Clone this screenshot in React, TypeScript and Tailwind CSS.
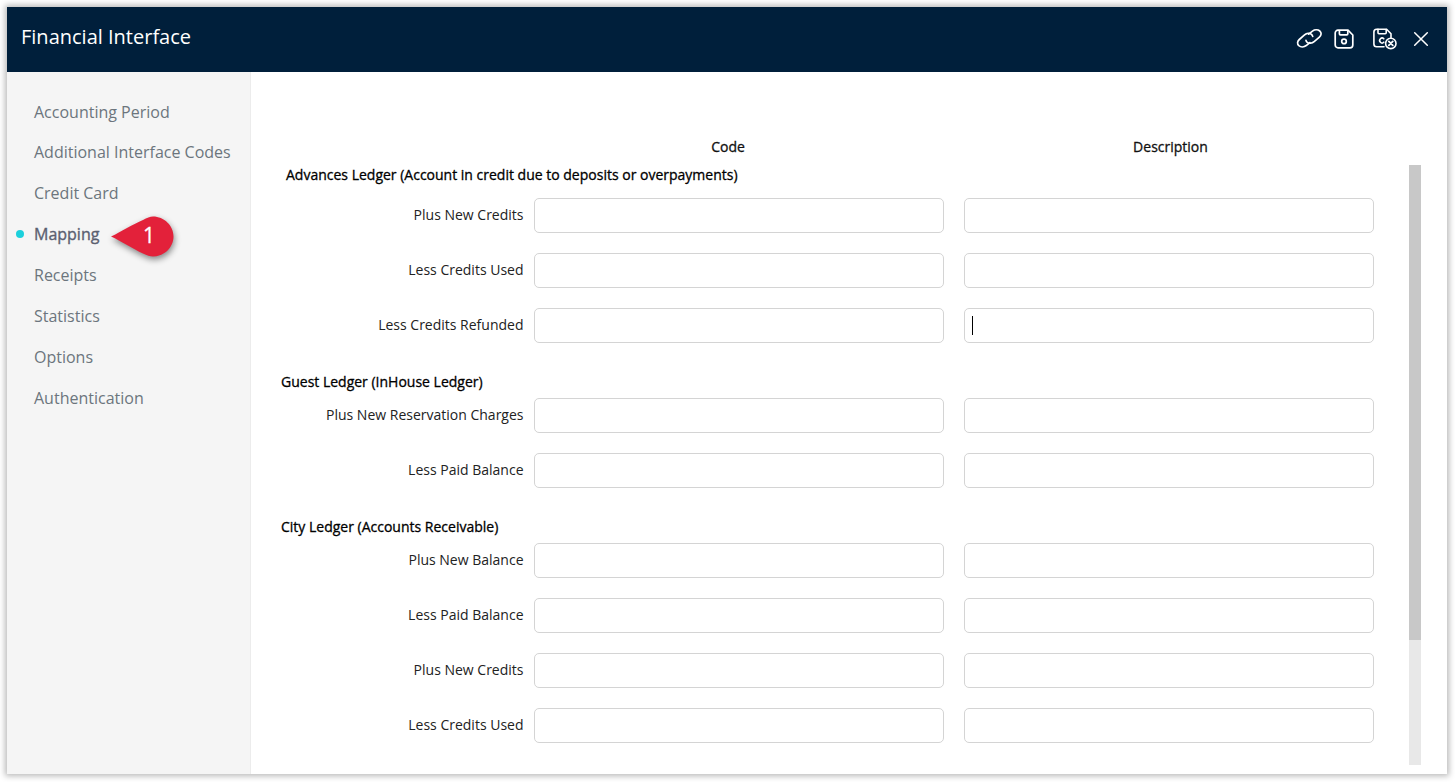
import React from "react";

const nav = ["Accounting Period", "Additional Interface Codes", "Credit Card", "Mapping", "Receipts", "Statistics", "Options", "Authentication"];

type Row = { label: string; caret?: boolean };
type Section = { title: string; indent: string; top: string; gap: string; rows: Row[] };

const sections: Section[] = [
  {
    title: "Advances Ledger (Account in credit due to deposits or overpayments)",
    indent: "pl-[35px]",
    top: "mt-0",
    gap: "mt-[13px]",
    rows: [{ label: "Plus New Credits" }, { label: "Less Credits Used" }, { label: "Less Credits Refunded", caret: true }],
  },
  {
    title: "Guest Ledger (InHouse Ledger)",
    indent: "pl-[30px]",
    top: "mt-[29px]",
    gap: "mt-[6px]",
    rows: [{ label: "Plus New Reservation Charges" }, { label: "Less Paid Balance" }],
  },
  {
    title: "City Ledger (Accounts Receivable)",
    indent: "pl-[30px]",
    top: "mt-[29px]",
    gap: "mt-[6px]",
    rows: [{ label: "Plus New Balance" }, { label: "Less Paid Balance" }, { label: "Plus New Credits" }, { label: "Less Credits Used" }],
  },
];

function LinkIcon() {
  return (
    <svg width="26" height="19" viewBox="1 1 23 17" fill="none" stroke="currentColor" strokeWidth="1.5" strokeLinecap="round">
      <path d="M12.2 5.6 15.6 2.9c2-1.5 4.9-1.5 6.6-.1 1.7 1.5 1.4 3.9-.4 5.5l-4.7 4.1c-1.9 1.6-4.6 1.8-6.2.5-.6-.5-1-1.1-1.1-1.8" />
      <path d="M15.8 7.6c-.2-.7-.5-1.3-1.1-1.8-1.6-1.3-4.3-1.1-6.2.5L3.8 10.4c-1.8 1.6-2.1 4-.4 5.5 1.7 1.4 4.6 1.4 6.6-.1l3.4-2.7" />
    </svg>
  );
}

function SaveIcon() {
  return (
    <svg width="20" height="20" viewBox="0 0 20 20" fill="none" stroke="currentColor" strokeWidth="1.7" strokeLinejoin="round">
      <path d="M4 1.2h10l4.8 4.8V16a2.8 2.8 0 0 1-2.8 2.8H4A2.8 2.8 0 0 1 1.2 16V4A2.8 2.8 0 0 1 4 1.2Z" />
      <path d="M5.4 1.4v3.4a1 1 0 0 0 1 1h6.4a1 1 0 0 0 1-1V1.6" />
      <circle cx="10" cy="12.4" r="2.3" />
    </svg>
  );
}

function SaveCloseIcon() {
  return (
    <svg width="24" height="22" viewBox="0 0 24 22" fill="none" stroke="currentColor" strokeWidth="1.6" strokeLinejoin="round" strokeLinecap="round">
      <path d="M11 18.8H3.6A2.8 2.8 0 0 1 .9 16V4A2.8 2.8 0 0 1 3.6 1.2h10l4.4 4.6v4" />
      <path d="M5 1.4v3.4a1 1 0 0 0 1 1h6.2a1 1 0 0 0 1-1V1.6" />
      <path d="M10.8 10.8a2.4 2.4 0 1 0 0 3.4" />
      <circle cx="17.8" cy="15.4" r="5.2" />
      <path d="m15.8 13.4 4 4M19.8 13.4l-4 4" strokeWidth="1.8" />
    </svg>
  );
}

function CloseIcon() {
  return (
    <svg width="16" height="16" viewBox="0 0 16 16" fill="none" stroke="currentColor" strokeWidth="1.5" strokeLinecap="round">
      <path d="M1.7 1.7l12.6 12.6M14.3 1.7 1.7 14.3" />
    </svg>
  );
}

function Field({ caret }: { caret?: boolean }) {
  return (
    <div className="flex h-[35px] w-[410px] items-center rounded-[5px] border border-[#d4d4d4] bg-white pl-[7px]">
      {caret && <div className="h-[19px] w-px bg-black" />}
    </div>
  );
}

export default function App() {
  return (
    <div className="h-[782px] w-[1455px] overflow-hidden bg-white pl-[7px] pt-[7px] font-['Open_Sans',sans-serif]">
      <div className="flex h-[767px] w-[1440px] flex-col bg-white shadow-[0_0_6px_2px_rgba(0,0,0,0.28)]">
        <header className="flex h-[65px] shrink-0 items-center justify-between bg-[#001f3b] pl-[14px] pr-[18px] text-white">
          <h1 className="mb-[6px] text-[20px] leading-[28px] text-white">Financial Interface</h1>
          <div className="mb-[2px] flex items-center">
            <LinkIcon />
            <div className="ml-[12px]"><SaveIcon /></div>
            <div className="ml-[19px] mt-[1px]"><SaveCloseIcon /></div>
            <div className="ml-[16px]"><CloseIcon /></div>
          </div>
        </header>
        <div className="flex min-h-0 flex-1">
          <aside className="relative w-[244px] shrink-0 border-r border-[#ececec] bg-[#f5f5f5] pl-[27px] pt-[20px]">
            <ul className="flex flex-col">
              {nav.map((n, i) => (
                <li key={n} className={"relative flex items-center text-[16px] " + (i === 0 ? "h-[39px] " : "h-[41px] ") + (n === "Mapping" ? "text-[#5b6070] [-webkit-text-stroke:0.35px_#5b6070]" : "text-[#6c757d]")}>
                  {n === "Mapping" && <span className="absolute left-[-18px] top-[17px] h-[8px] w-[8px] rounded-full bg-[#1cd0dc]" />}
                  {n}
                </li>
              ))}
            </ul>
            <div className="absolute left-[103px] top-[143px] h-[44px] w-[66px]">
              <svg width="66" height="44" viewBox="0 0 66 44" className="drop-shadow-[1px_3px_3px_rgba(0,0,0,0.45)]">
                <path d="M1 21.5 C 11 17, 23 9, 33 5 C 37 3, 40 1.5, 43 1.5 C 54 1.5, 63.5 10.5, 63.5 21.5 C 63.5 32.5, 54 41.5, 43 41.5 C 40 41.5, 37 40.5, 33 38.5 C 23 34, 11 26, 1 21.5 Z" fill="#e3213a" />
              </svg>
              <span className="absolute left-[33px] top-[6px] text-[21px] leading-[28px] text-white [-webkit-text-stroke:0.3px_white]">1</span>
            </div>
          </aside>
          <main className="relative min-w-0 flex-1 bg-white">
            <div className="flex pl-[283px] pt-[65px] text-[14px] leading-[20px] text-[#111] [-webkit-text-stroke:0.3px_#111]">
              <div className="w-[410px] pr-[22px] text-center">Code</div>
              <div className="ml-[20px] w-[410px] pl-[3px] text-center">Description</div>
            </div>
            <div className="pt-[8px]">
              {sections.map((s) => (
                <section key={s.title} className={s.top}>
                  <h2 className={"text-[14px] leading-[20px] text-black [-webkit-text-stroke:0.3px_black] " + s.indent}>{s.title}</h2>
                  <div className={s.gap + " flex flex-col gap-[20px]"}>
                    {s.rows.map((r) => (
                      <div key={r.label + s.title} className="flex items-center">
                        <label className="mb-[2px] w-[272.5px] text-right text-[14px] text-[#222]">{r.label}</label>
                        <div className="ml-[10.5px]"><Field /></div>
                        <div className="ml-[20px]"><Field caret={r.caret} /></div>
                      </div>
                    ))}
                  </div>
                </section>
              ))}
            </div>
            <div className="absolute left-[1158px] top-[93px] h-[600px] w-[12px] bg-[#e8e8e8]">
              <div className="h-[475px] w-full bg-[#c8c8c8]" />
            </div>
          </main>
        </div>
      </div>
    </div>
  );
}
